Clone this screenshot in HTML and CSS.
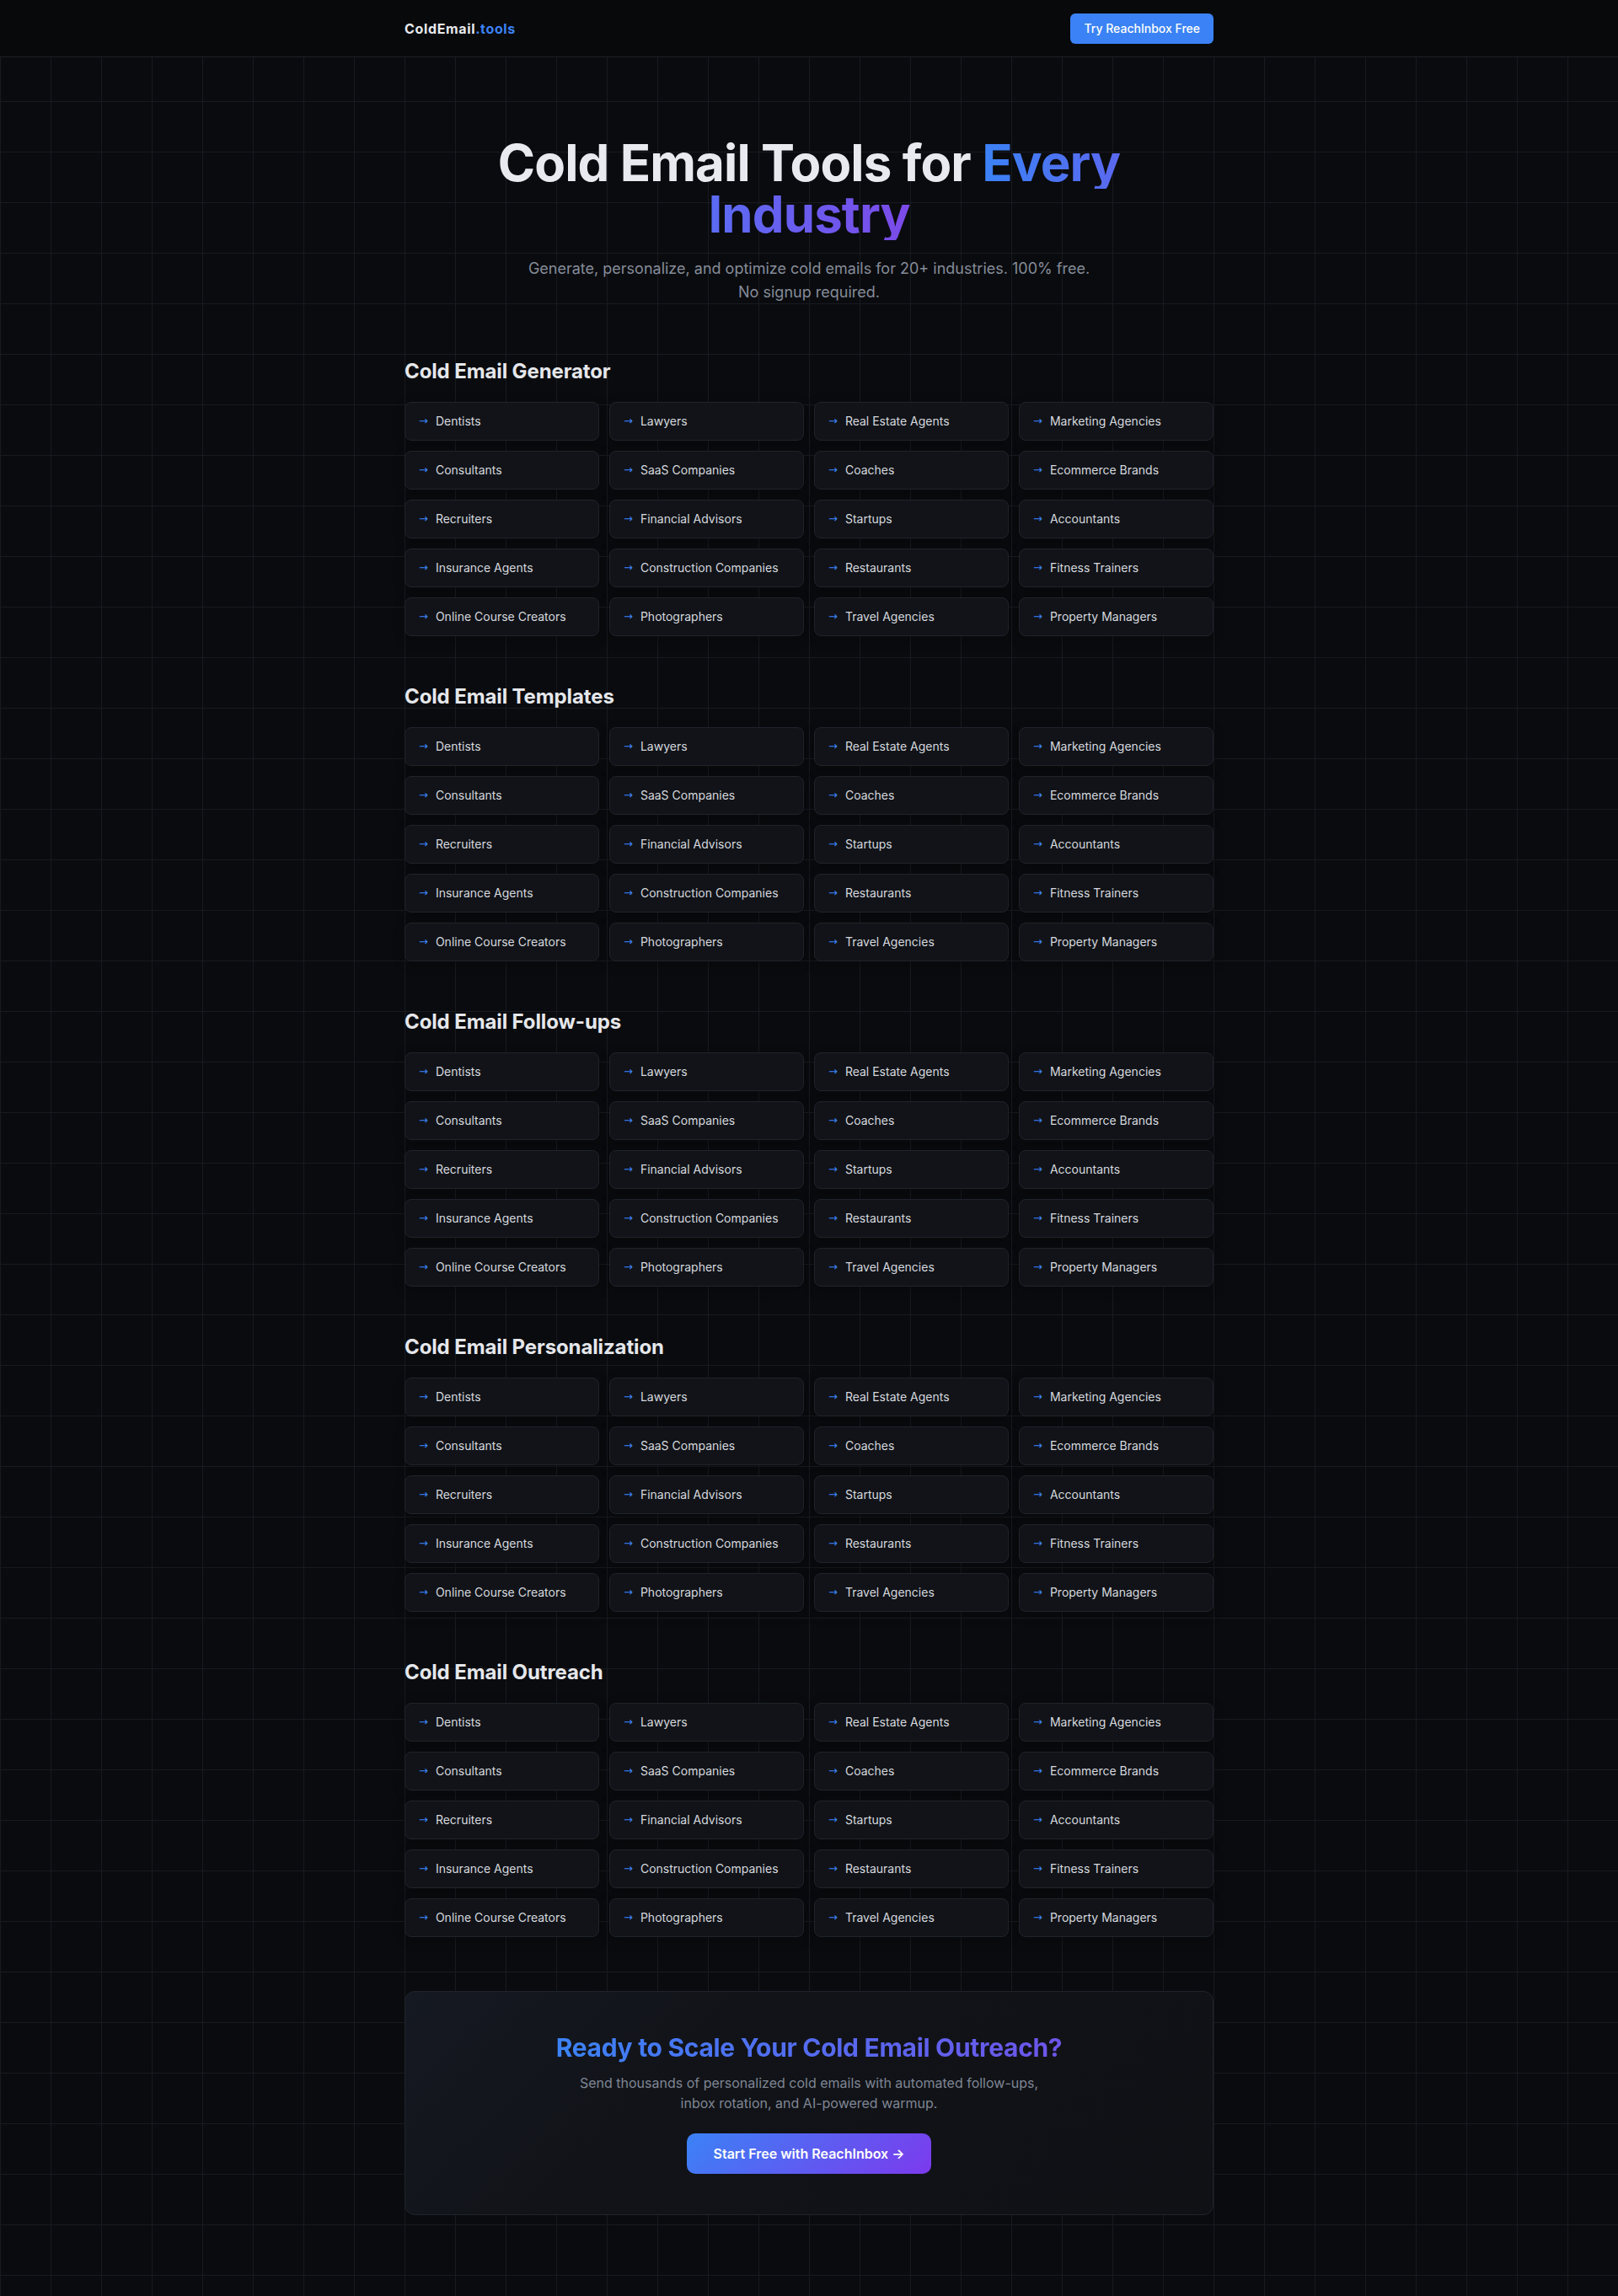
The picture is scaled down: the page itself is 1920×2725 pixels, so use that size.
FILE: index.html
```html
<!DOCTYPE html>
<html lang="en">
<head>
<meta charset="utf-8">
<title>ColdEmail.tools — Cold Email Tools for Every Industry</title>
<link rel="stylesheet" href="styles.css">
</head>
<body>
<header class="nav">
  <div class="nav-inner">
    <a class="logo" href="#">ColdEmail<span class="logo-accent">.tools</span></a>
    <a class="nav-btn" href="#">Try ReachInbox Free</a>
  </div>
</header>
<main class="container">
  <section class="hero">
    <h1 class="hero-title"><span class="hero-line">Cold Email Tools for <span class="grad g1">Every</span></span><span class="hero-line"><span class="grad g2">Industry</span></span></h1>
    <p class="hero-sub">Generate, personalize, and optimize cold emails for 20+ industries. 100% free. No signup required.</p>
  </section>

  <section class="group">
    <h2 class="group-title">Cold Email Generator</h2>
    <div class="grid">
      <a class="card" href="#"><span class="arrow">→</span>Dentists</a>
      <a class="card" href="#"><span class="arrow">→</span>Lawyers</a>
      <a class="card" href="#"><span class="arrow">→</span>Real Estate Agents</a>
      <a class="card" href="#"><span class="arrow">→</span>Marketing Agencies</a>
      <a class="card" href="#"><span class="arrow">→</span>Consultants</a>
      <a class="card" href="#"><span class="arrow">→</span>SaaS Companies</a>
      <a class="card" href="#"><span class="arrow">→</span>Coaches</a>
      <a class="card" href="#"><span class="arrow">→</span>Ecommerce Brands</a>
      <a class="card" href="#"><span class="arrow">→</span>Recruiters</a>
      <a class="card" href="#"><span class="arrow">→</span>Financial Advisors</a>
      <a class="card" href="#"><span class="arrow">→</span>Startups</a>
      <a class="card" href="#"><span class="arrow">→</span>Accountants</a>
      <a class="card" href="#"><span class="arrow">→</span>Insurance Agents</a>
      <a class="card" href="#"><span class="arrow">→</span>Construction Companies</a>
      <a class="card" href="#"><span class="arrow">→</span>Restaurants</a>
      <a class="card" href="#"><span class="arrow">→</span>Fitness Trainers</a>
      <a class="card" href="#"><span class="arrow">→</span>Online Course Creators</a>
      <a class="card" href="#"><span class="arrow">→</span>Photographers</a>
      <a class="card" href="#"><span class="arrow">→</span>Travel Agencies</a>
      <a class="card" href="#"><span class="arrow">→</span>Property Managers</a>
    </div>
  </section>

  <section class="group">
    <h2 class="group-title">Cold Email Templates</h2>
    <div class="grid">
      <a class="card" href="#"><span class="arrow">→</span>Dentists</a>
      <a class="card" href="#"><span class="arrow">→</span>Lawyers</a>
      <a class="card" href="#"><span class="arrow">→</span>Real Estate Agents</a>
      <a class="card" href="#"><span class="arrow">→</span>Marketing Agencies</a>
      <a class="card" href="#"><span class="arrow">→</span>Consultants</a>
      <a class="card" href="#"><span class="arrow">→</span>SaaS Companies</a>
      <a class="card" href="#"><span class="arrow">→</span>Coaches</a>
      <a class="card" href="#"><span class="arrow">→</span>Ecommerce Brands</a>
      <a class="card" href="#"><span class="arrow">→</span>Recruiters</a>
      <a class="card" href="#"><span class="arrow">→</span>Financial Advisors</a>
      <a class="card" href="#"><span class="arrow">→</span>Startups</a>
      <a class="card" href="#"><span class="arrow">→</span>Accountants</a>
      <a class="card" href="#"><span class="arrow">→</span>Insurance Agents</a>
      <a class="card" href="#"><span class="arrow">→</span>Construction Companies</a>
      <a class="card" href="#"><span class="arrow">→</span>Restaurants</a>
      <a class="card" href="#"><span class="arrow">→</span>Fitness Trainers</a>
      <a class="card" href="#"><span class="arrow">→</span>Online Course Creators</a>
      <a class="card" href="#"><span class="arrow">→</span>Photographers</a>
      <a class="card" href="#"><span class="arrow">→</span>Travel Agencies</a>
      <a class="card" href="#"><span class="arrow">→</span>Property Managers</a>
    </div>
  </section>

  <section class="group">
    <h2 class="group-title">Cold Email Follow-ups</h2>
    <div class="grid">
      <a class="card" href="#"><span class="arrow">→</span>Dentists</a>
      <a class="card" href="#"><span class="arrow">→</span>Lawyers</a>
      <a class="card" href="#"><span class="arrow">→</span>Real Estate Agents</a>
      <a class="card" href="#"><span class="arrow">→</span>Marketing Agencies</a>
      <a class="card" href="#"><span class="arrow">→</span>Consultants</a>
      <a class="card" href="#"><span class="arrow">→</span>SaaS Companies</a>
      <a class="card" href="#"><span class="arrow">→</span>Coaches</a>
      <a class="card" href="#"><span class="arrow">→</span>Ecommerce Brands</a>
      <a class="card" href="#"><span class="arrow">→</span>Recruiters</a>
      <a class="card" href="#"><span class="arrow">→</span>Financial Advisors</a>
      <a class="card" href="#"><span class="arrow">→</span>Startups</a>
      <a class="card" href="#"><span class="arrow">→</span>Accountants</a>
      <a class="card" href="#"><span class="arrow">→</span>Insurance Agents</a>
      <a class="card" href="#"><span class="arrow">→</span>Construction Companies</a>
      <a class="card" href="#"><span class="arrow">→</span>Restaurants</a>
      <a class="card" href="#"><span class="arrow">→</span>Fitness Trainers</a>
      <a class="card" href="#"><span class="arrow">→</span>Online Course Creators</a>
      <a class="card" href="#"><span class="arrow">→</span>Photographers</a>
      <a class="card" href="#"><span class="arrow">→</span>Travel Agencies</a>
      <a class="card" href="#"><span class="arrow">→</span>Property Managers</a>
    </div>
  </section>

  <section class="group">
    <h2 class="group-title">Cold Email Personalization</h2>
    <div class="grid">
      <a class="card" href="#"><span class="arrow">→</span>Dentists</a>
      <a class="card" href="#"><span class="arrow">→</span>Lawyers</a>
      <a class="card" href="#"><span class="arrow">→</span>Real Estate Agents</a>
      <a class="card" href="#"><span class="arrow">→</span>Marketing Agencies</a>
      <a class="card" href="#"><span class="arrow">→</span>Consultants</a>
      <a class="card" href="#"><span class="arrow">→</span>SaaS Companies</a>
      <a class="card" href="#"><span class="arrow">→</span>Coaches</a>
      <a class="card" href="#"><span class="arrow">→</span>Ecommerce Brands</a>
      <a class="card" href="#"><span class="arrow">→</span>Recruiters</a>
      <a class="card" href="#"><span class="arrow">→</span>Financial Advisors</a>
      <a class="card" href="#"><span class="arrow">→</span>Startups</a>
      <a class="card" href="#"><span class="arrow">→</span>Accountants</a>
      <a class="card" href="#"><span class="arrow">→</span>Insurance Agents</a>
      <a class="card" href="#"><span class="arrow">→</span>Construction Companies</a>
      <a class="card" href="#"><span class="arrow">→</span>Restaurants</a>
      <a class="card" href="#"><span class="arrow">→</span>Fitness Trainers</a>
      <a class="card" href="#"><span class="arrow">→</span>Online Course Creators</a>
      <a class="card" href="#"><span class="arrow">→</span>Photographers</a>
      <a class="card" href="#"><span class="arrow">→</span>Travel Agencies</a>
      <a class="card" href="#"><span class="arrow">→</span>Property Managers</a>
    </div>
  </section>

  <section class="group">
    <h2 class="group-title">Cold Email Outreach</h2>
    <div class="grid">
      <a class="card" href="#"><span class="arrow">→</span>Dentists</a>
      <a class="card" href="#"><span class="arrow">→</span>Lawyers</a>
      <a class="card" href="#"><span class="arrow">→</span>Real Estate Agents</a>
      <a class="card" href="#"><span class="arrow">→</span>Marketing Agencies</a>
      <a class="card" href="#"><span class="arrow">→</span>Consultants</a>
      <a class="card" href="#"><span class="arrow">→</span>SaaS Companies</a>
      <a class="card" href="#"><span class="arrow">→</span>Coaches</a>
      <a class="card" href="#"><span class="arrow">→</span>Ecommerce Brands</a>
      <a class="card" href="#"><span class="arrow">→</span>Recruiters</a>
      <a class="card" href="#"><span class="arrow">→</span>Financial Advisors</a>
      <a class="card" href="#"><span class="arrow">→</span>Startups</a>
      <a class="card" href="#"><span class="arrow">→</span>Accountants</a>
      <a class="card" href="#"><span class="arrow">→</span>Insurance Agents</a>
      <a class="card" href="#"><span class="arrow">→</span>Construction Companies</a>
      <a class="card" href="#"><span class="arrow">→</span>Restaurants</a>
      <a class="card" href="#"><span class="arrow">→</span>Fitness Trainers</a>
      <a class="card" href="#"><span class="arrow">→</span>Online Course Creators</a>
      <a class="card" href="#"><span class="arrow">→</span>Photographers</a>
      <a class="card" href="#"><span class="arrow">→</span>Travel Agencies</a>
      <a class="card" href="#"><span class="arrow">→</span>Property Managers</a>
    </div>
  </section>

  <section class="cta">
    <h2 class="cta-title"><span class="cta-grad">Ready to Scale Your Cold Email Outreach?</span></h2>
    <p class="cta-sub">Send thousands of personalized cold emails with automated follow-ups, inbox rotation, and AI-powered warmup.</p>
    <a class="cta-btn" href="#">Start Free with ReachInbox →</a>
  </section>
</main>
</body>
</html>
```
FILE: styles.css
```css
* { box-sizing: border-box; }

html, body { margin: 0; padding: 0; }

body {
  background-color: #0a0b0e;
  background-image:
    linear-gradient(to bottom, #171a20 1px, transparent 1px),
    linear-gradient(to right, #171a20 1px, transparent 1px);
  background-size: 60px 60px;
  color: #e5e7eb;
  font-family: Inter, "Noto Sans", "DejaVu Sans", sans-serif;
  -webkit-font-smoothing: antialiased;
}

a { text-decoration: none; color: inherit; }

/* Nav */
.nav {
  height: 68px;
  background: #07090b;
  border-bottom: 1px solid #1c2027;
}
.nav-inner {
  width: 960px;
  height: 67px;
  margin: 0 auto;
  display: flex;
  align-items: center;
  justify-content: space-between;
}
.logo {
  font-size: 16px;
  font-weight: 700;
  color: #e8eaee;
  letter-spacing: 0.04em;
}
.logo-accent { color: #3b82f6; }
.nav-btn {
  display: inline-flex;
  align-items: center;
  height: 36px;
  padding: 0 16px;
  background: #3b82f6;
  color: #ffffff;
  font-size: 14px;
  font-weight: 500;
  border-radius: 6px;
}

/* Layout */
.container {
  width: 960px;
  margin: 0 auto;
  padding-bottom: 96px;
}

/* Hero */
.hero {
  padding: 95px 0 64px;
  text-align: center;
}
.hero-title {
  margin: 0;
  font-size: 60px;
  line-height: 61px;
  font-weight: 700;
  letter-spacing: -0.015em;
  color: #e8eaef;
}
.hero-line {
  display: block;
  height: 61px;
}
.grad {
  display: inline-block;
  -webkit-background-clip: text;
  background-clip: text;
  color: transparent;
}
.g1 { background-image: linear-gradient(90deg, #3b82f6 0%, #5a68ef 100%); }
.g2 { background-image: linear-gradient(90deg, #5a6cf3 0%, #7c4ae8 100%); }
.hero-sub {
  margin: 20px auto 0;
  max-width: 680px;
  font-size: 18px;
  line-height: 28px;
  color: #858c99;
}

/* Groups */
.group { margin-bottom: 56px; }
.group:last-of-type { margin-bottom: 0; }
.group-title {
  margin: 0 0 20px;
  font-size: 24px;
  line-height: 32px;
  font-weight: 700;
  color: #e5e7eb;
  letter-spacing: -0.005em;
}
.grid {
  display: grid;
  grid-template-columns: repeat(4, 1fr);
  gap: 12px;
}
.card {
  display: flex;
  align-items: center;
  gap: 9px;
  padding: 12px 16px;
  background: #111318;
  border: 1px solid #1f232b;
  border-radius: 8px;
  font-size: 14px;
  line-height: 20px;
  color: #d6d9df;
  box-shadow: 0 4px 14px rgba(0, 0, 0, 0.25);
}
.arrow {
  flex: none;
  color: #3b82f6;
  font-family: "DejaVu Sans", sans-serif;
  font-size: 13px;
  line-height: 20px;
}

/* CTA */
.cta {
  margin-top: 64px;
  padding: 48px;
  text-align: center;
  border: 1px solid #1f232b;
  border-radius: 12px;
  background: linear-gradient(135deg, #151922 0%, #111318 35%, #0f1115 100%);
}
.cta-title {
  margin: 0;
  font-size: 30px;
  line-height: 36px;
  font-weight: 700;
  letter-spacing: -0.01em;
}
.cta-grad {
  background: linear-gradient(90deg, #3b82f6 0%, #6d55e9 100%);
  -webkit-background-clip: text;
  background-clip: text;
  color: transparent;
}
.cta-sub {
  margin: 12px auto 0;
  max-width: 560px;
  font-size: 16px;
  line-height: 24px;
  color: #7f8694;
}
.cta-btn {
  display: inline-block;
  margin-top: 24px;
  padding: 12px 32px;
  font-size: 16px;
  line-height: 24px;
  font-weight: 600;
  color: #ffffff;
  border-radius: 10px;
  background: linear-gradient(135deg, #3b82f6 0%, #7c3aed 100%);
}
```
